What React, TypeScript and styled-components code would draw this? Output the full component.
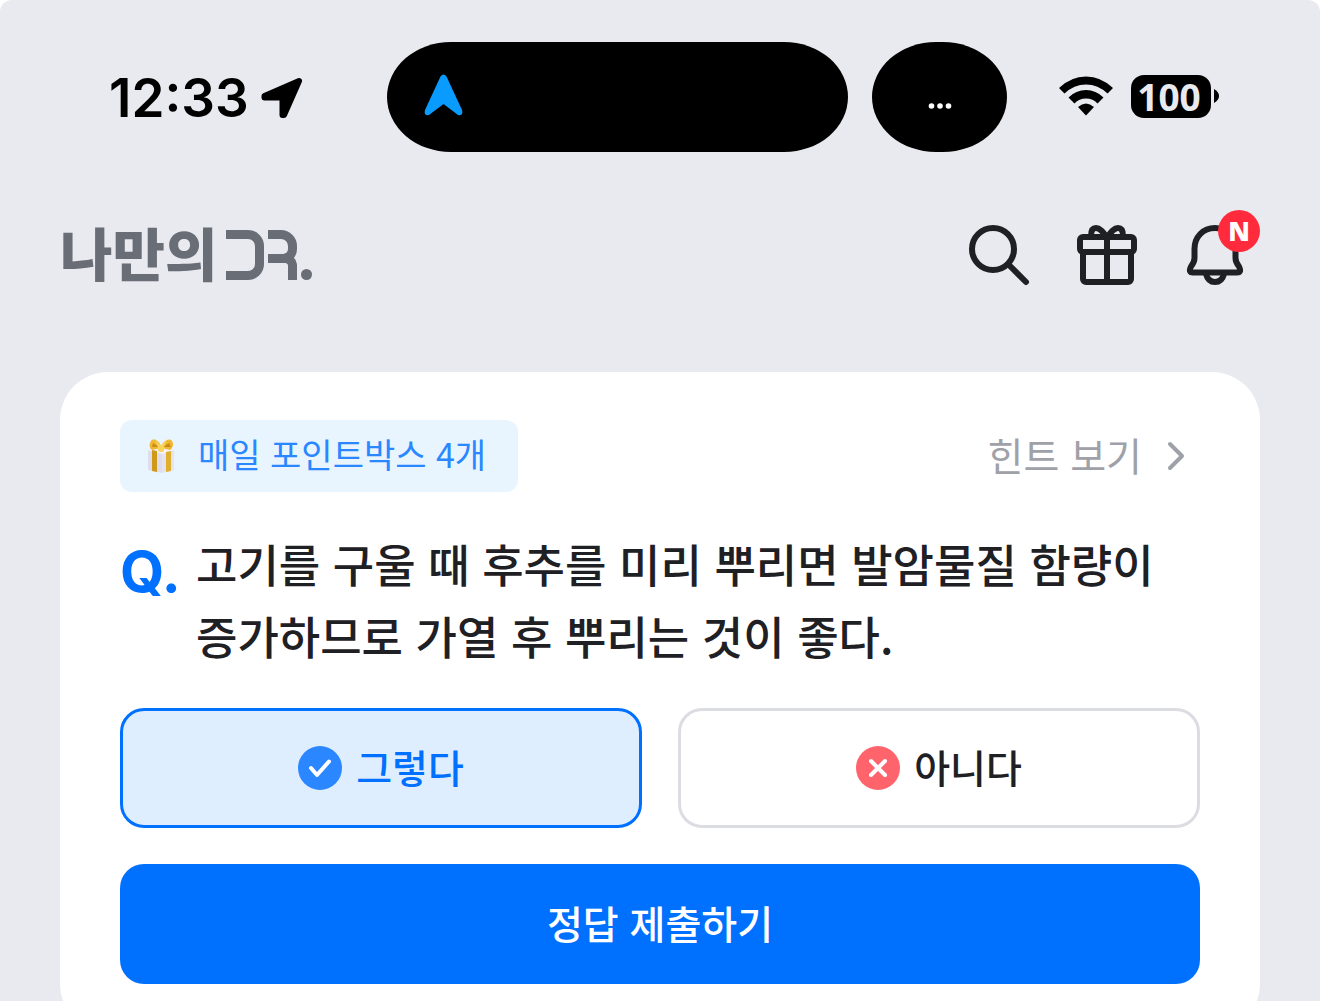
import React, { useState } from "react";
import styled, { createGlobalStyle } from "styled-components";

const KR = `"Noto Sans CJK KR", "Noto Sans", sans-serif`;
const UI = `Inter, "Noto Sans CJK KR", sans-serif`;
const BLUE = "#0070ff";
const INK = "#1f2024";

const GlobalStyle = createGlobalStyle`
  *, *::before, *::after { box-sizing: border-box; }
  body { margin: 0; background: #fff; font-family: ${KR}; color: ${INK}; }
  button, input { font: inherit; color: inherit; }
`;

const Screen = styled.div`
  height: 100vh;
  overflow: hidden;
  background: #e9eaf0;
  border-radius: 12px 12px 0 0;
`;

const StatusBar = styled.div`
  display: flex;
  align-items: center;
  height: 152px;
  padding: 42px 101px 0 109px;
  color: #000;
`;

const Clock = styled.div`
  display: flex;
  align-items: center;
  gap: 12px;
  min-width: 278px;
  padding-top: 2px;
  font: 600 53px/1 ${UI};
`;

const Islands = styled.div`
  display: flex;
  gap: 24px;
`;

const Island = styled.div<{ $wide?: boolean }>`
  display: flex;
  align-items: center;
  justify-content: ${(p) => (p.$wide ? "flex-start" : "center")};
  width: ${(p) => (p.$wide ? "461px" : "135px")};
  height: 110px;
  padding: ${(p) => (p.$wide ? "0 36px 4px" : "18px 0 0")};
  border-radius: 64px / 55px;
  background: #000;
`;

const Indicators = styled.div`
  display: flex;
  align-items: center;
  justify-content: flex-end;
  gap: 18px;
  flex: 1;
  padding-bottom: 2px;
`;

const Battery = styled.div`
  display: flex;
  align-items: center;
  gap: 3px;
`;

const BatteryLevel = styled.span`
  width: 80px;
  height: 43px;
  padding-right: 4px;
  border-radius: 13px;
  background: #000;
  color: #e9eaf0;
  font: 700 37px/43px "Noto Sans", sans-serif;
  text-align: center;
`;

const Header = styled.header`
  display: flex;
  align-items: center;
  justify-content: space-between;
  height: 206px;
  padding: 0 69px 0 60px;
`;

const Logo = styled.a`
  display: flex;
  align-items: center;
  gap: 9px;
  color: #686d76;
  font: 900 57px/64px ${KR};
  text-decoration: none;
`;

const LogoText = styled.span`
  padding-bottom: 8px;
`;

const Monogram = styled.span`
  display: flex;
  gap: 4px;
  height: 50px;
`;

const LetterD = styled.span`
  width: 38px;
  border: 9px solid;
  border-left: 0;
  border-radius: 0 16px 16px 0;
`;

const LetterR = styled.span`
  display: flex;
  flex-direction: column;
  width: 29px;

  &::before, &::after {
    content: "";
    border: 9px solid;
    border-left: 0;
  }
  &::before {
    height: 33px;
    border-radius: 0 16px 14px 0;
  }
  &::after {
    height: 26px;
    margin-top: -9px;
    border-bottom: 0;
    border-radius: 0 12px 0 0;
  }
`;

const LetterDot = styled.span`
  align-self: flex-end;
  width: 11px;
  height: 11px;
  border-radius: 50%;
  background: currentColor;
`;

const Actions = styled.nav`
  display: flex;
  gap: 36px;
`;

const IconButton = styled.button`
  position: relative;
  display: flex;
  padding: 0;
  border: 0;
  background: none;
  cursor: pointer;
`;

const NewBadge = styled.span`
  position: absolute;
  top: -9px;
  right: -9px;
  width: 42px;
  height: 42px;
  border-radius: 50%;
  background: #ff2b3d;
  color: #fff;
  font: 800 26px/42px "Open Sans", sans-serif;
  text-align: center;
`;

const Card = styled.main`
  display: flex;
  flex-direction: column;
  gap: 36px;
  margin: 14px 60px 0;
  padding: 48px 60px;
  border-radius: 48px;
  background: #fff;
`;

const CardTop = styled.div`
  display: flex;
  align-items: center;
  justify-content: space-between;
`;

const Label = styled.span`
  padding-bottom: 5px;
`;

const Tag = styled.span`
  display: flex;
  align-items: center;
  gap: 20px;
  height: 72px;
  padding: 0 32px 0 24px;
  border-radius: 12px;
  background: #e8f5ff;
  color: #2b87ff;
  font-size: 34px;
`;

const HintLink = styled.a`
  display: flex;
  align-items: center;
  gap: 16px;
  padding-right: 6px;
  color: #9fa1a9;
  font-size: 39px;
  line-height: 60px;
  text-decoration: none;
`;

const Quiz = styled.form`
  display: flex;
  flex-direction: column;
  gap: 36px;
`;

const Question = styled.h1`
  display: flex;
  align-items: flex-start;
  gap: 20px;
  margin: 0;
  font-size: 45px;
  font-weight: 500;
  line-height: 72px;
`;

const QuestionMark = styled.span`
  width: 56px;
  padding-top: 8px;
  color: ${BLUE};
  font: 700 57px/72px ${UI};
`;

const QuestionText = styled.span`
  flex: 1;
  word-break: keep-all;
`;

const Answers = styled.div`
  display: grid;
  grid-template-columns: 1fr 1fr;
  gap: 36px;
`;

const Answer = styled.label<{ $selected: boolean }>`
  display: flex;
  align-items: center;
  justify-content: center;
  gap: 14px;
  height: 120px;
  border: 3px solid ${(p) => (p.$selected ? BLUE : "#dcdde2")};
  border-radius: 24px;
  background: ${(p) => (p.$selected ? "#dfeeff" : "#fff")};
  color: ${(p) => (p.$selected ? BLUE : INK)};
  font-size: 39px;
  font-weight: 500;
  line-height: 60px;
  cursor: pointer;
`;

const HiddenRadio = styled.input`
  position: absolute;
  opacity: 0;
  pointer-events: none;
`;

const Submit = styled.button`
  height: 120px;
  padding: 0 0 4px;
  border: 0;
  border-radius: 24px;
  background: ${BLUE};
  color: #fff;
  font-size: 39px;
  font-weight: 500;
  line-height: 60px;
  cursor: pointer;
`;

const LocationIcon = () => (
  <svg width="42" height="42" viewBox="0 0 42 42" aria-hidden="true">
    <path d="M38 4 3.500 19v1.500H21.500V38h1.500L38 4Z" stroke="#000" strokeWidth="6" strokeLinejoin="round" />
  </svg>
);

const NavigationIcon = () => (
  <svg width="42" height="44" viewBox="0 0 42 44" aria-hidden="true">
    <path d="M17.500 3.500Q20.500-.5 23.500 3.500L39 37Q40.500 43 35 42L20.500 31 6 42Q.5 43 2 37Z" fill="#0a9bff" />
  </svg>
);

const DotsIcon = () => (
  <svg width="24" height="6" viewBox="0 0 24 6" fill="#fff" aria-hidden="true">
    <circle cx="3.500" cy="3" r="2.800" />
    <circle cx="12" cy="3" r="2.800" />
    <circle cx="20.500" cy="3" r="2.800" />
  </svg>
);

const WifiIcon = () => (
  <svg width="54" height="40" viewBox="0 0 54 40" aria-hidden="true">
    <path d="M0 12Q12 .5 27 .5T54 12L48.500 17.500Q39 8.500 27 8.500T5.500 17.500Z" />
    <path d="M9.500 21.500Q17 14 27 14T44.500 21.500L38.500 27.500Q34 22.500 27 22.500T15.500 27.500Z" />
    <path d="M19 31Q27 24 35 31L27 39.500Z" />
  </svg>
);

const BatteryCap = () => (
  <svg width="5" height="14" viewBox="0 0 5 14" aria-hidden="true">
    <path d="M0 0Q5 3 5 7T0 14Z" />
  </svg>
);

const outline = {
  fill: "none",
  stroke: INK,
  strokeWidth: 6,
  strokeLinecap: "round" as const,
  strokeLinejoin: "round" as const,
};

const SearchIcon = () => (
  <svg width="72" height="72" viewBox="0 0 72 72" aria-hidden="true" {...outline}>
    <circle cx="30" cy="30" r="21" />
    <path d="M46 46 63 63" />
  </svg>
);

const GiftIcon = () => (
  <svg width="72" height="72" viewBox="0 0 72 72" aria-hidden="true" {...outline}>
    <rect x="9" y="18" width="54" height="15" rx="3" />
    <path d="M12 33h48v27a3 3 0 0 1-3 3H15a3 3 0 0 1-3-3Z" />
    <path d="M36 18v45" />
    <path d="M36 18C32 13 29 9 25 9q-5 0-5 8M36 18C40 13 43 9 47 9q5 0 5 8" />
  </svg>
);

const BellIcon = () => (
  <svg width="72" height="72" viewBox="0 0 72 72" aria-hidden="true" {...outline}>
    <path d="M36 9C24 9 15.500 18 15.500 30v9q0 4-3.500 8.500Q9 53.500 14 53.500H58q5 0 2-6Q56.500 43 56.500 39v-9C56.500 18 48 9 36 9Z" />
    <path d="M27 55Q29 63 36 63T45 55" />
  </svg>
);

const PresentIcon = () => (
  <svg width="34" height="36" viewBox="0 0 34 36" aria-hidden="true">
    <path d="M4 12 18 15v20L4 32Z" fill="#dedded" />
    <path d="M18 15 30 12v20L18 35Z" fill="#e6e3ef" />
    <path d="M4 12 16 9 30 12 18 16Z" fill="#f4f2fa" />
    <path d="M8 12l5 1v21l-5-1Z" fill="#cf9a18" />
    <path d="M22 14l5-1v20l-5 1Z" fill="#dfae2c" />
    <path d="M17 8C15 2 9 0 7 3 5 6 5 10 8 12l8-2 2 0 8 2c3-2 4-6 2-9C26 0 20 2 17 8Z" fill="#efb732" />
    <path d="M15 9 9 5l-1 4ZM19 9l6-4 2 4Z" fill="#c98c14" />
    <path d="M11 1l6 7 6-7-3 8h-6ZM13 10l4-3 4 3-2 4h-4Z" fill="#f8d45e" />
  </svg>
);

const ChevronIcon = () => (
  <svg width="36" height="36" viewBox="0 0 36 36" aria-hidden="true" fill="none" stroke="#9fa1a9" strokeWidth="4" strokeLinecap="round" strokeLinejoin="round">
    <path d="M12 6 24 18 12 30" />
  </svg>
);

const YesIcon = () => (
  <svg width="44" height="44" viewBox="0 0 44 44" aria-hidden="true" fill="none" stroke="#fff" strokeWidth="4" strokeLinecap="round" strokeLinejoin="round">
    <circle cx="22" cy="22" r="22" fill="#2b87ff" stroke="none" />
    <path d="M13 22 19 29 31 15.500" />
  </svg>
);

const NoIcon = () => (
  <svg width="44" height="44" viewBox="0 0 44 44" aria-hidden="true" fill="none" stroke="#fff" strokeWidth="4" strokeLinecap="round">
    <circle cx="22" cy="22" r="22" fill="#ff646c" stroke="none" />
    <path d="M15 15 29 29M29 15 15 29" />
  </svg>
);

const OPTIONS = [
  { id: "yes", label: "그렇다", Icon: YesIcon },
  { id: "no", label: "아니다", Icon: NoIcon },
];

export default function App() {
  const [answer, setAnswer] = useState("yes");

  return (
    <Screen lang="ko">
      <GlobalStyle />
      <StatusBar>
        <Clock>
          <span>12:33</span>
          <LocationIcon />
        </Clock>
        <Islands>
          <Island $wide>
            <NavigationIcon />
          </Island>
          <Island>
            <DotsIcon />
          </Island>
        </Islands>
        <Indicators>
          <WifiIcon />
          <Battery>
            <BatteryLevel>100</BatteryLevel>
            <BatteryCap />
          </Battery>
        </Indicators>
      </StatusBar>

      <Header>
        <Logo href="#" aria-label="나만의 DR.">
          <LogoText>나만의</LogoText>
          <Monogram aria-hidden="true">
            <LetterD />
            <LetterR />
            <LetterDot />
          </Monogram>
        </Logo>
        <Actions>
          <IconButton type="button" aria-label="검색">
            <SearchIcon />
          </IconButton>
          <IconButton type="button" aria-label="선물">
            <GiftIcon />
          </IconButton>
          <IconButton type="button" aria-label="알림">
            <BellIcon />
            <NewBadge>N</NewBadge>
          </IconButton>
        </Actions>
      </Header>

      <Card>
        <CardTop>
          <Tag>
            <PresentIcon />
            <Label>매일 포인트박스 4개</Label>
          </Tag>
          <HintLink href="#">
            <Label>힌트 보기</Label>
            <ChevronIcon />
          </HintLink>
        </CardTop>
        <Quiz onSubmit={(e) => e.preventDefault()}>
          <Question>
            <QuestionMark>Q.</QuestionMark>
            <QuestionText>
              고기를 구울 때 후추를 미리 뿌리면 발암물질 함량이 증가하므로 가열 후 뿌리는 것이 좋다.
            </QuestionText>
          </Question>
          <Answers role="radiogroup">
            {OPTIONS.map(({ id, label, Icon }) => (
              <Answer key={id} $selected={answer === id}>
                <HiddenRadio type="radio" name="answer" value={id} checked={answer === id} onChange={() => setAnswer(id)} />
                <Icon />
                <Label>{label}</Label>
              </Answer>
            ))}
          </Answers>
          <Submit type="submit">정답 제출하기</Submit>
        </Quiz>
      </Card>
    </Screen>
  );
}
